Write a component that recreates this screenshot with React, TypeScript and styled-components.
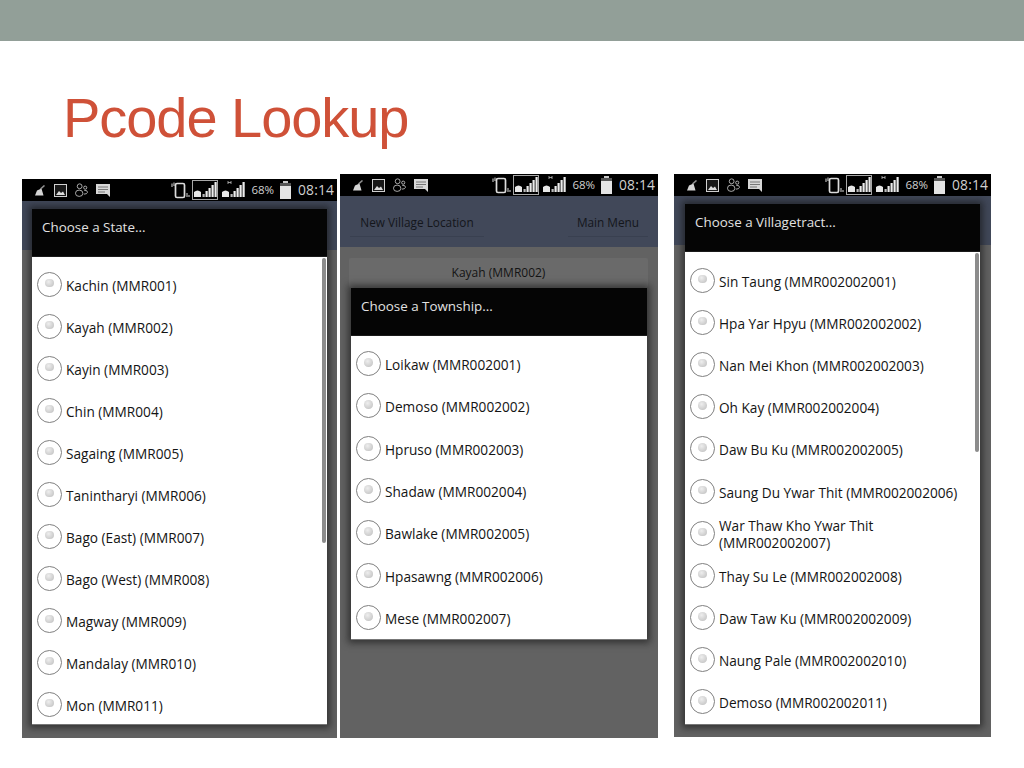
import React from "react";
import styled, { createGlobalStyle } from "styled-components";

const Global = createGlobalStyle`
  html, body { margin: 0; padding: 0; background: #fff; }
  body { font-family: "Open Sans", "Liberation Sans", sans-serif; }
`;

const Slide = styled.div`
  width: 1024px;
  height: 768px;
  overflow: hidden;
  background: #fff;
`;
const TopBar = styled.div`
  height: 41px;
  background: #929f98;
`;
const Title = styled.h1`
  margin: 0;
  height: 133px;
  padding: 44px 0 0 63px;
  box-sizing: border-box;
  font: 400 56px/66px "Liberation Sans", Arial, sans-serif;
  letter-spacing: -1.05px;
  color: #cf5138;
`;
const Phones = styled.div`
  display: flex;
  align-items: flex-start;
  padding-left: 22px;
`;
const Phone = styled.section<{ $w: number; $h: number; $mt: number; $ml: number }>`
  position: relative;
  display: flex;
  flex-direction: column;
  width: ${(p) => p.$w}px;
  height: ${(p) => p.$h}px;
  margin-top: ${(p) => p.$mt}px;
  margin-left: ${(p) => p.$ml}px;
  background: #626262;
  overflow: hidden;
`;
const Status = styled.div`
  flex: none;
  display: flex;
  align-items: center;
  justify-content: space-between;
  height: 22px;
  padding: 0 3px 0 13px;
  background: #000;
  color: #d8d8d8;
`;
const StatusGroup = styled.div<{ $gap: number }>`
  display: flex;
  align-items: center;
  gap: ${(p) => p.$gap}px;
`;
const Percent = styled.span`
  margin: 0 4px 0 3px;
  font: 400 11.5px/22px "Open Sans", sans-serif;
  color: #d0d0d0;
`;
const Clock = styled.span`
  margin-left: 5px;
  font: 400 13.8px/22px "Open Sans", sans-serif;
  letter-spacing: 0.15px;
  color: #d0d0d0;
`;
const ActionBand = styled.div<{ $h: number }>`
  flex: none;
  display: flex;
  justify-content: space-between;
  height: ${(p) => p.$h}px;
  padding: 11px 10px 0 10px;
  box-sizing: border-box;
  background: #414859;
`;
const ActionButton = styled.div<{ $w: number }>`
  width: ${(p) => p.$w}px;
  height: 30px;
  border-bottom: 1px solid #394050;
  box-sizing: border-box;
  text-align: center;
  font-size: 11.8px;
  line-height: 31px;
  color: #14161b;
`;
const Selected = styled.div`
  margin: 11px 10px 0 9px;
  height: 30px;
  border-radius: 2px;
  background: #6a6a6a;
  text-align: center;
  font-size: 12px;
  line-height: 29px;
  color: #141414;
`;
const Dialog = styled.div<{ $top: number; $left: number; $h: number; $w: number }>`
  position: absolute;
  top: ${(p) => p.$top}px;
  left: ${(p) => p.$left}px;
  width: ${(p) => p.$w}px;
  height: ${(p) => p.$h}px;
  display: flex;
  flex-direction: column;
  box-shadow: 0 0 7px 3px rgba(20, 20, 20, 0.6);
`;
const DialogHead = styled.div`
  flex: none;
  height: 48px;
  padding: 8px 0 0 10px;
  box-sizing: border-box;
  background: #050505;
  border-bottom: 1px solid #1a1a1a;
  font-size: 13.4px;
  line-height: 20px;
  color: #e2e2e2;
`;
const List = styled.div<{ $pt: number }>`
  position: relative;
  flex: 1;
  min-height: 0;
  overflow: hidden;
  padding-top: ${(p) => p.$pt}px;
  background: #fff;
  border-bottom: 1px solid #777;
`;
const Row = styled.div<{ $h: number }>`
  display: flex;
  align-items: center;
  height: ${(p) => p.$h}px;
  padding-left: 5px;
`;
const Radio = styled.span`
  flex: none;
  position: relative;
  width: 25px;
  height: 25px;
  margin: -2px 4px 0 0;
  box-sizing: border-box;
  border: 1.5px solid #808080;
  border-radius: 50%;
  background: #fff;
  &::after {
    content: "";
    position: absolute;
    left: 7px;
    top: 6px;
    width: 8.5px;
    height: 8.5px;
    border-radius: 50%;
    background: radial-gradient(circle at 40% 35%, #eeeeee, #bdbdbd);
  }
`;
const Label = styled.span`
  font-size: 13.65px;
  line-height: 17px;
  color: #141414;
`;
const Thumb = styled.div<{ $h: number }>`
  position: absolute;
  top: 1px;
  right: 1px;
  width: 4px;
  height: ${(p) => p.$h}px;
  border-radius: 2px;
  background: #8c8c8c;
`;

const Broom = () => (
  <svg width="11" height="11" viewBox="0 0 11 11">
    <path d="M0 10.5 L2 5.5 L6.5 3.5 L8.5 10.5 Z" fill="#d4d4d4" />
    <path d="M5.5 4 L9.5 0.5" stroke="#8f8f8f" strokeWidth="1.6" />
  </svg>
);
const ImageIcon = () => (
  <svg width="13" height="13" viewBox="0 0 13 13">
    <rect x="0.5" y="0.5" width="12" height="12" fill="#181818" stroke="#d0d0d0" />
    <path d="M2 11 L5 7 L7 9 L9 7.5 L11 11 Z" fill="#dcdcdc" />
  </svg>
);
const People = () => (
  <svg width="13" height="14" viewBox="0 0 14 15" fill="none" stroke="#c8c8c8" strokeWidth="0.9">
    <circle cx="5" cy="3.5" r="2.6" />
    <ellipse cx="4.5" cy="11" rx="4" ry="3.4" />
    <circle cx="11" cy="5" r="1.7" />
    <path d="M10 8 Q13.5 7.5 13.5 10 Q13 12 9.5 12" />
  </svg>
);
const Chat = () => (
  <svg width="14" height="13" viewBox="0 0 14 13">
    <path d="M0 0 H14 V13 L11 10 H0 Z" fill="#d8d8d8" />
    <path d="M2 3 H12 M2 5.5 H12 M2 8 H9" stroke="#777" strokeWidth="1" />
  </svg>
);
const Vibrate = () => (
  <svg width="19" height="17" viewBox="0 0 19 17" fill="none" stroke="#dcdcdc">
    <rect x="4.5" y="1.5" width="9" height="14" rx="1.5" strokeWidth="1.7" />
    <path d="M1 1.5 V5 M3 0.5 V4" strokeWidth="1" />
    <path d="M16 11 V15 M18 13 V15" strokeWidth="1" />
  </svg>
);
const Signal = ({ boxed }: { boxed?: boolean }) => (
  <svg width="26" height="20" viewBox="0 0 26 20">
    {boxed && <rect x="0.5" y="0.5" width="25" height="19" fill="none" stroke="#a8a8a8" />}
    <path d="M2 17 V12 Q5.5 9 9 12 V17 Z" fill="#e8e8e8" />
    {[10.5, 13.5, 16.5, 19.5, 22.5].map((x, i) => (
      <rect key={x} x={x} y={14 - i * 3} width="2.2" height={3 + i * 3} fill={i === 0 ? "#bbb" : "#ececec"} />
    ))}
    {!boxed && <path d="M8 1 V4 M11 1 V4 M8 2.5 H11" stroke="#bbb" strokeWidth="0.8" />}
  </svg>
);
const Battery = () => (
  <svg width="11" height="18" viewBox="0 0 11 18">
    <rect x="3" y="0" width="5" height="2" fill="#c8c8c8" />
    <rect x="0" y="2" width="11" height="16" fill="#555" />
    <rect x="0" y="5" width="11" height="13" fill="#e4e4e4" />
  </svg>
);

const StatusBar = () => (
  <Status>
    <StatusGroup $gap={8}>
      <Broom />
      <ImageIcon />
      <People />
      <Chat />
    </StatusGroup>
    <StatusGroup $gap={2}>
      <Vibrate />
      <Signal boxed />
      <Signal />
      <Percent>68%</Percent>
      <Battery />
      <Clock>08:14</Clock>
    </StatusGroup>
  </Status>
);

const ItemList = ({ items, pt, rowH, thumb }: { items: string[]; pt: number; rowH: number; thumb?: number }) => (
  <List $pt={pt}>
    {items.map((t) => (
      <Row key={t} $h={rowH}>
        <Radio />
        <Label>{t}</Label>
      </Row>
    ))}
    {thumb ? <Thumb $h={thumb} /> : null}
  </List>
);

const states = [
  "Kachin (MMR001)", "Kayah (MMR002)", "Kayin (MMR003)", "Chin (MMR004)", "Sagaing (MMR005)",
  "Tanintharyi (MMR006)", "Bago (East) (MMR007)", "Bago (West) (MMR008)", "Magway (MMR009)",
  "Mandalay (MMR010)", "Mon (MMR011)",
];
const townships = [
  "Loikaw (MMR002001)", "Demoso (MMR002002)", "Hpruso (MMR002003)", "Shadaw (MMR002004)",
  "Bawlake (MMR002005)", "Hpasawng (MMR002006)", "Mese (MMR002007)",
];
const tracts = [
  "Sin Taung (MMR002002001)", "Hpa Yar Hpyu (MMR002002002)", "Nan Mei Khon (MMR002002003)",
  "Oh Kay (MMR002002004)", "Daw Bu Ku (MMR002002005)", "Saung Du Ywar Thit (MMR002002006)",
  "War Thaw Kho Ywar Thit (MMR002002007)", "Thay Su Le (MMR002002008)", "Daw Taw Ku (MMR002002009)",
  "Naung Pale (MMR002002010)", "Demoso (MMR002002011)",
];

export default function App() {
  return (
    <Slide>
      <Global />
      <TopBar />
      <Title>Pcode Lookup</Title>
      <Phones>
        <Phone $w={315} $h={559} $mt={5} $ml={0}>
          <StatusBar />
          <ActionBand $h={49} />
          <Dialog $top={30} $left={10} $w={295} $h={516}>
            <DialogHead>Choose a State...</DialogHead>
            <ItemList items={states} pt={7} rowH={42} thumb={285} />
          </Dialog>
        </Phone>
        <Phone $w={318} $h={564} $mt={0} $ml={3}>
          <StatusBar />
          <ActionBand $h={51}>
            <ActionButton $w={134}>New Village Location</ActionButton>
            <ActionButton $w={80}>Main Menu</ActionButton>
          </ActionBand>
          <Selected>Kayah (MMR002)</Selected>
          <Dialog $top={114} $left={11} $w={296} $h={352}>
            <DialogHead>Choose a Township...</DialogHead>
            <ItemList items={townships} pt={7.5} rowH={42.33} />
          </Dialog>
        </Phone>
        <Phone $w={317} $h={563} $mt={0} $ml={16}>
          <StatusBar />
          <ActionBand $h={49} />
          <Dialog $top={30} $left={11} $w={295} $h={521}>
            <DialogHead>Choose a Villagetract...</DialogHead>
            <ItemList items={tracts} pt={8} rowH={42.2} thumb={199} />
          </Dialog>
        </Phone>
      </Phones>
    </Slide>
  );
}
